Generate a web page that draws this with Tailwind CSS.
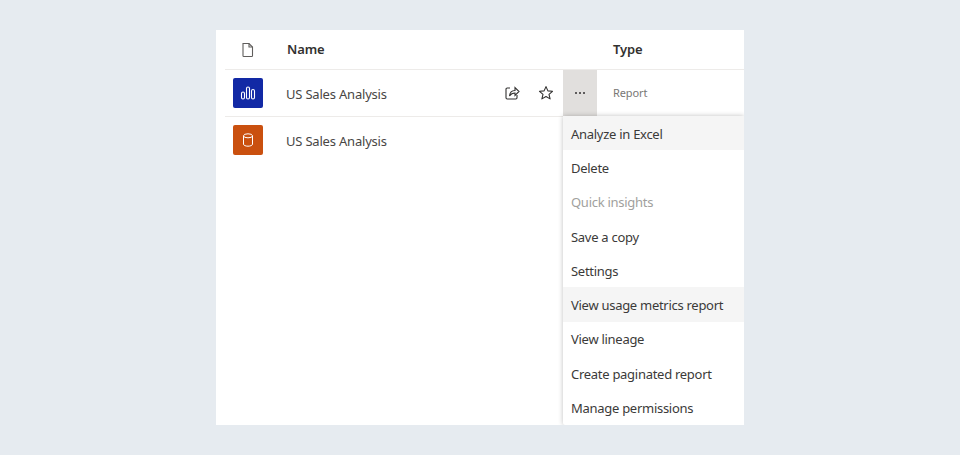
<!DOCTYPE html>
<html lang="en">
<head>
  <meta charset="UTF-8" />
  <title>Workspace content</title>
  <script src="https://cdn.jsdelivr.net/npm/@tailwindcss/browser@4"></script>
</head>
<body class="bg-[#e6ebf0] h-[455px] overflow-hidden font-['Noto_Sans',sans-serif] text-[#323130]">
  <div class="flex justify-center pt-[30px]">
    <div class="relative w-[528px] h-[395px] bg-white overflow-hidden">
      <!-- header -->
      <div class="flex items-center h-10 ml-[9px] border-b border-[#edebe9]">
        <div class="w-[61px] flex justify-center pr-[15px]">
          <svg class="w-4 h-4" viewBox="0 0 16 16" fill="none" stroke="#605e5c" stroke-width="1.1">
            <path d="M3 1.500h6l3.500 3.500v8.700c0 .5-.4.8-.8.8H3.800c-.5 0-.8-.3-.8-.8z" />
            <path d="M9 1.600v3.400h3.400" />
          </svg>
        </div>
        <div class="w-[327px] text-[13px] tracking-[-0.1px] font-semibold pl-[1px]">Name</div>
        <div class="text-[13px] tracking-[-0.1px] font-semibold">Type</div>
      </div>
      <!-- row 1 -->
      <div class="flex items-center h-[47px] ml-[9px] border-b border-[#edebe9]">
        <div class="w-[61px] flex">
          <div class="w-[30px] h-[30px] rounded-[2px] bg-[#1229a5] flex items-center justify-center ml-[8px]">
            <svg class="w-4 h-4" viewBox="0 0 16 16" fill="none" stroke="#fff" stroke-width="1.100">
              <rect x="1.500" y="7" width="3" height="7" rx="1.500" />
              <rect x="6.500" y="2" width="3" height="12" rx="1.500" />
              <rect x="11.500" y="4.500" width="3" height="9.500" rx="1.500" />
            </svg>
          </div>
        </div>
        <div class="w-[209px] pt-[3px] text-[13px] tracking-[-0.2px] text-[#484644]">US Sales Analysis</div>
        <div class="w-[34px] flex justify-center">
          <svg class="w-4 h-4" viewBox="0 0 16 16" fill="none" stroke="#323130" stroke-width="1.100">
            <path d="M6 3H3.200c-.7 0-1.200.5-1.200 1.200v8.600c0 .7.5 1.200 1.200 1.200h8.600c.7 0 1.200-.5 1.200-1.200V10" />
            <path d="M5.500 11c.3-3.300 2.500-5.400 5.500-5.500V2.600L15 6.500l-4 3.900V8C8.800 8 6.800 9 5.500 11z" />
          </svg>
        </div>
        <div class="w-[34px] flex justify-center">
          <svg class="w-4 h-4" viewBox="0 0 16 16" fill="none" stroke="#323130" stroke-width="1.100">
            <path d="M8 1.600l1.900 4.300 4.600.4-3.500 3 1.100 4.600L8 11.500l-4.100 2.400L5 9.300l-3.500-3 4.600-.4z" stroke-linejoin="round" />
          </svg>
        </div>
        <div class="w-[34px] h-full bg-[#e1dfdd] flex items-center justify-center gap-[2px]">
          <span class="w-[2px] h-[2px] rounded-full bg-[#323130]"></span>
          <span class="w-[2px] h-[2px] rounded-full bg-[#323130]"></span>
          <span class="w-[2px] h-[2px] rounded-full bg-[#323130]"></span>
        </div>
        <div class="pl-[16px] pt-[1px] text-[11px] tracking-[-0.1px] text-[#797775]">Report</div>
      </div>
      <!-- row 2 -->
      <div class="flex items-center h-[47px] ml-[9px]">
        <div class="w-[61px] flex">
          <div class="w-[30px] h-[30px] rounded-[2px] bg-[#ca500f] flex items-center justify-center ml-[8px] mb-[2px]">
            <svg class="w-4 h-4" viewBox="0 0 16 16" fill="none" stroke="#fff" stroke-width="1">
              <ellipse cx="8" cy="3.800" rx="4.500" ry="2" />
              <path d="M3.500 3.800v8.400c0 1.100 2 2 4.500 2s4.500-.9 4.500-2V3.800" />
            </svg>
          </div>
        </div>
        <div class="pt-[2px] text-[13px] tracking-[-0.2px] text-[#484644]">US Sales Analysis</div>
      </div>
      <!-- context menu -->
      <ul class="absolute left-[347px] top-[86px] w-[181px] h-[309px] bg-white rounded-bl-[2px] shadow-[0_0_5px_rgba(0,0,0,0.25)] text-[13px] tracking-[-0.28px] text-[#3b3a39]">
        <li class="h-[34.250px] flex items-center px-2 pt-[3px] whitespace-nowrap bg-[#f5f5f5]">Analyze in Excel</li>
        <li class="h-[34.250px] flex items-center px-2 pt-[2px] whitespace-nowrap">Delete</li>
        <li class="h-[34.250px] flex items-center px-2 pt-[2px] whitespace-nowrap text-[#a19f9d]">Quick insights</li>
        <li class="h-[34.250px] flex items-center px-2 pt-[3px] whitespace-nowrap">Save a copy</li>
        <li class="h-[34.250px] flex items-center px-2 pt-[3px] whitespace-nowrap">Settings</li>
        <li class="h-[34.250px] flex items-center px-2 pt-[2px] whitespace-nowrap bg-[#f5f5f5]">View usage metrics report</li>
        <li class="h-[34.250px] flex items-center px-2 pt-[3px] whitespace-nowrap">View lineage</li>
        <li class="h-[34.250px] flex items-center px-2 pt-[3px] whitespace-nowrap">Create paginated report</li>
        <li class="h-[34.250px] flex items-center px-2 pt-[3px] whitespace-nowrap">Manage permissions</li>
      </ul>
    </div>
  </div>
</body>
</html>
